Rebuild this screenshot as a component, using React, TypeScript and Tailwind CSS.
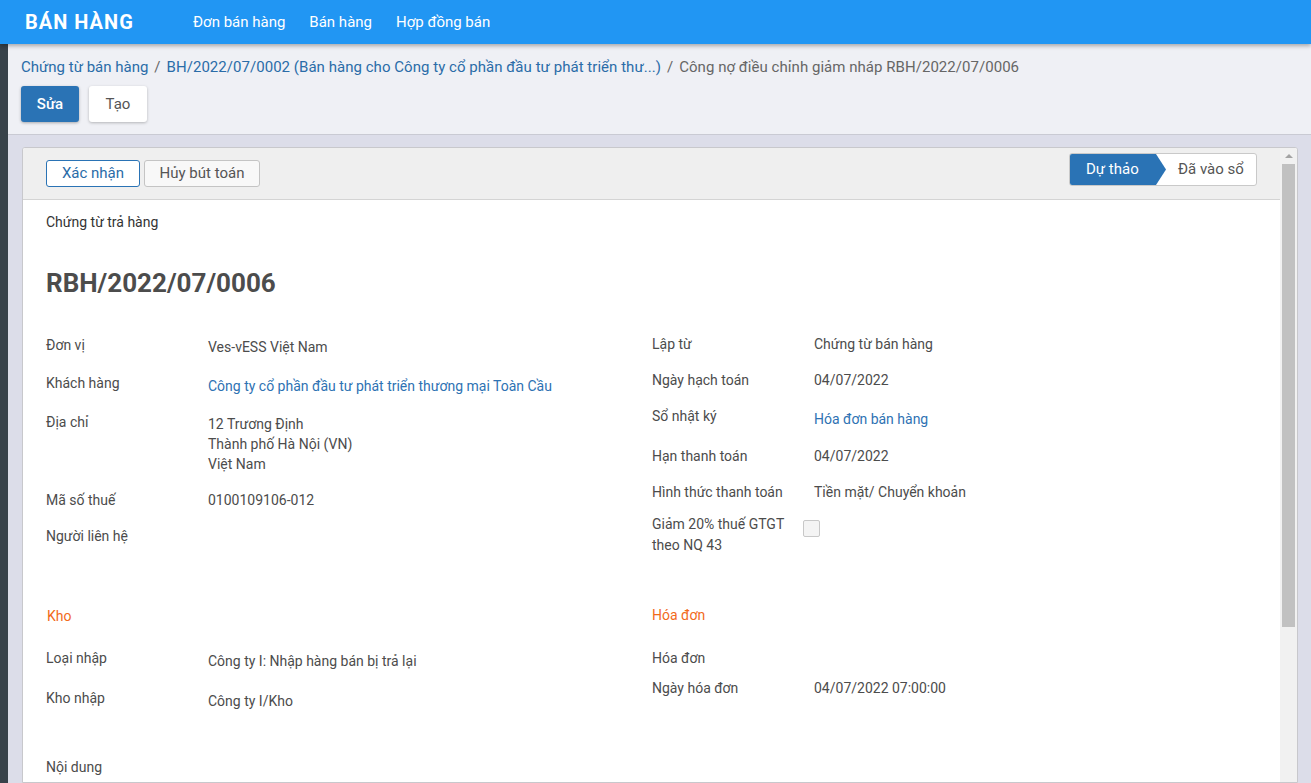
import React from "react";

const F = { fontFamily: "Roboto, 'Noto Sans', sans-serif" };

function Row({ h, label, children, vpt = 0, labelW = "w-[162px]" }: { h: string; label: React.ReactNode; children?: React.ReactNode; vpt?: number; labelW?: string }) {
  return (
    <div className={`flex ${h}`}>
      <div className={`${labelW} shrink-0 leading-[20px] text-[#4c4c4c]`}>{label}</div>
      <div className="leading-[20px] text-[#4c4c4c]" style={{ paddingTop: vpt }}>{children}</div>
    </div>
  );
}

export default function App() {
  return (
    <div className="h-[783px] w-full overflow-hidden flex flex-col text-[14px]" style={F}>
      <div className="h-[44px] shrink-0 bg-[#2196f3] flex items-center shadow-[0_2px_4px_rgba(0,0,0,0.3)] z-10 relative">
        <div className="pl-[25px] w-[193px] text-white font-bold text-[20px] tracking-[1px]">BÁN HÀNG</div>
        <div className="flex gap-[24px] text-white text-[15px]">
          <span>Đơn bán hàng</span>
          <span>Bán hàng</span>
          <span>Hợp đồng bán</span>
        </div>
      </div>
      <div className="flex flex-1 min-h-0">
        <div className="w-[8px] shrink-0 bg-[#38424a]" />
        <div className="flex-1 flex flex-col min-w-0">
          <div className="h-[91px] shrink-0 bg-[#eff0f5] border-b border-[#c9cad3] pl-[13px] pt-[12px]">
            <div className="text-[15px] leading-[22px] text-[#666] whitespace-nowrap">
              <span className="text-[#2a6ca8]">Chứng từ bán hàng</span>
              <span className="mx-[6px] text-[#666]">/</span>
              <span className="text-[#2a6ca8] tracking-[0.04px]">BH/2022/07/0002 (Bán hàng cho Công ty cổ phần đầu tư phát triển thư...)</span>
              <span className="mx-[6px] text-[#666]">/</span>
              <span className="tracking-[0.04px]">Công nợ điều chỉnh giảm nháp RBH/2022/07/0006</span>
            </div>
            <div className="flex gap-[10px] mt-[8px]">
              <button className="h-[36px] w-[58px] rounded-[3px] bg-[#2a73b5] text-white text-[15px] font-medium shadow-[0_1px_3px_rgba(0,0,0,0.3)]">Sửa</button>
              <button className="h-[36px] w-[58px] rounded-[3px] bg-white text-[#555] text-[15px] shadow-[0_1px_3px_rgba(0,0,0,0.25)]">Tạo</button>
            </div>
          </div>
          <div className="flex-1 min-h-0 bg-[#dcdde9] pl-[14px] pr-[13px] pt-[12px]">
            <div className="h-full bg-white border border-[#c8c8cc] rounded-t-[3px] flex overflow-hidden">
              <div className="flex-1 min-w-0">
                <div className="h-[52px] bg-[#efefef] border-b border-[#d4d4d4] flex items-center justify-between pl-[23px] pr-[23px]">
                  <div className="flex gap-[4px]">
                    <button className="h-[27px] w-[94px] rounded-[3px] border border-[#2a73b5] bg-white text-[#2a6ca8] text-[15px]">Xác nhận</button>
                    <button className="h-[27px] w-[116px] rounded-[3px] border border-[#c4c4c4] bg-[#f8f8f8] text-[#555] text-[15px]">Hủy bút toán</button>
                  </div>
                  <div className="flex h-[33px] border border-[#c9c9c9] rounded-[3px] bg-white -mt-[8px] overflow-hidden">
                    <div className="w-[96px] bg-[#2a73b5] text-white text-[15px] flex items-center pl-[16px] [clip-path:polygon(0_0,calc(100%-10px)_0,100%_50%,calc(100%-10px)_100%,0_100%)]">Dự thảo</div>
                    <div className="w-[90px] text-[#555] text-[15px] flex items-center pl-[12px]">Đã vào sổ</div>
                  </div>
                </div>
                <div className="pl-[23px] pr-[24px]">
                  <div className="pt-[12px] leading-[20px] text-[#333]">Chứng từ trả hàng</div>
                  <div className="mt-[33px] text-[26px] font-bold leading-[36px] text-[#4c4c4c]">RBH/2022/07/0006</div>
                  <div className="grid grid-cols-2 mt-[33px]">
                    <div className="pt-[1px]">
                      <Row h="h-[38px]" label="Đơn vị" vpt={2}>Ves-vESS Việt Nam</Row>
                      <Row h="h-[39px]" label="Khách hàng" vpt={3}><span className="text-[#2e72b3]">Công ty cổ phần đầu tư phát triển thương mại Toàn Cầu</span></Row>
                      <Row h="h-[78px]" label="Địa chỉ" vpt={2}>
                        <div>12 Trương Định</div>
                        <div>Thành phố Hà Nội (VN)</div>
                        <div>Việt Nam</div>
                      </Row>
                      <Row h="h-[36px]" label="Mã số thuế">0100109106-012</Row>
                      <Row h="h-[36px]" label="Người liên hệ"></Row>
                    </div>
                    <div className="pl-[1px]">
                      <Row h="h-[36px]" label="Lập từ">Chứng từ bán hàng</Row>
                      <Row h="h-[36px]" label="Ngày hạch toán">04/07/2022</Row>
                      <Row h="h-[40px]" label="Sổ nhật ký" vpt={3}><span className="text-[#2e72b3]">Hóa đơn bán hàng</span></Row>
                      <Row h="h-[36px]" label="Hạn thanh toán">04/07/2022</Row>
                      <Row h="h-[32px]" label="Hình thức thanh toán">Tiền mặt/ Chuyển khoản</Row>
                      <div className="flex">
                        <div className="w-[151px] shrink-0 leading-[21px] text-[#4c4c4c]">Giảm 20% thuế GTGT theo NQ 43</div>
                        <div className="mt-[6px] w-[17px] h-[17px] border border-[#c8c8c8] rounded-[2px] bg-[#f4f4f4]" />
                      </div>
                    </div>
                  </div>
                  <div className="grid grid-cols-2 mt-[44px]">
                    <div>
                      <div className="text-[#f26a1b] leading-[20px] pl-[1px]">Kho</div>
                      <div className="mt-[22px]">
                        <Row h="h-[40px]" label="Loại nhập" vpt={3}>Công ty I: Nhập hàng bán bị trả lại</Row>
                        <Row h="h-[39px]" label="Kho nhập" vpt={3}>Công ty I/Kho</Row>
                      </div>
                      <div className="mt-[30px] leading-[20px] text-[#4c4c4c]">Nội dung</div>
                    </div>
                    <div className="pl-[1px] -mt-[1px]">
                      <div className="text-[#f26a1b] leading-[20px]">Hóa đơn</div>
                      <div className="mt-[23px]">
                        <Row h="h-[30px]" label="Hóa đơn"></Row>
                        <Row h="h-[30px]" label="Ngày hóa đơn">04/07/2022 07:00:00</Row>
                      </div>
                    </div>
                  </div>
                </div>
              </div>
              <div className="w-[17px] shrink-0 bg-[#f1f1f1] flex flex-col items-center">
                <div className="h-[16px] flex items-center justify-center">
                  <div className="w-0 h-0 border-l-[4px] border-r-[4px] border-b-[4px] border-l-transparent border-r-transparent border-b-[#a3a3a3]" />
                </div>
                <div className="w-[13px] h-[463px] bg-[#c1c1c1]" />
              </div>
            </div>
          </div>
        </div>
      </div>
    </div>
  );
}
